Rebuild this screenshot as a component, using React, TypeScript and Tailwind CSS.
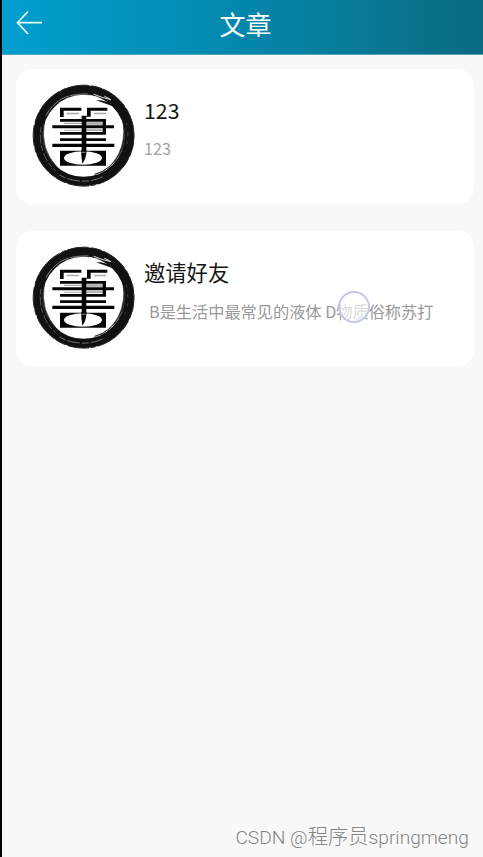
const cjk = "font-['Noto_Sans_CJK_SC',sans-serif]";

function Seal() {
  return (
    <svg viewBox="36 27 312 312" className="block size-[104px] shrink-0" aria-hidden="true">
      <circle cx="191" cy="182" r="137" fill="none" stroke="#111" strokeWidth="28" />
      <circle cx="191" cy="182" r="151.5" fill="none" stroke="#222" strokeWidth="3" strokeDasharray="65 9 32 4 84 7 15 5" />
      <path d="M310 145Q322 200 300 237Q275 283 224 298Q269 288 296 237Q316 196 310 145M72 145Q59 196 80 237Q91 262 112 278Q86 249 76 217Q67 184 72 145" fill="#222" stroke="#222" strokeWidth="2" />
      <g fill="none" stroke="#fff" strokeLinecap="round">
        <path d="M78 121Q94 91 126 71Q160 55 207 57" strokeWidth="2" strokeDasharray="32 5 18 4" opacity=".75" />
        <path d="M208 61L234 67M222 58L246 67L272 74M237 77L271 86M254 64L268 71" strokeWidth="3" opacity=".85" />
        <path d="M63 157Q57 192 68 226Q79 263 106 286" strokeWidth="1.5" strokeDasharray="14 9 25 8" opacity=".6" />
        <path d="M119 300Q145 316 179 318Q220 321 251 304" strokeWidth="3" strokeDasharray="19 8 35 9" opacity=".4" />
        <path d="M319 145Q330 192 315 229" strokeWidth="1.5" strokeDasharray="5 23 9 19" opacity=".4" />
      </g>
      <path d="M228 76L285 96L267 82L242 76Z" fill="#111" />
      <g fill="#aaa">
        <path d="M140 113h37v5h-37zM222 113h37v5h-37zM132 143h53v4h-53zM199 142h49v7h-49zM132 164h53v3h-53zM199 163h49v5h-49z" />
      </g>
      <g fill="#050505">
        <path d="M120 98h64v9h-53v19h-11zM201 98h61v9h-50v18h-13v107h-14V122h16z" />
        <path d="M120 132h138v19h24v9h-24v19H120v-8h128v-11H97v-9h151v-11H120zM120 190h138v8H120zM97 206h186v10H97z" />
        <path d="M120 227h138v45H120z" />
      </g>
      <ellipse cx="189" cy="249" rx="57" ry="20" fill="#fff" />
      <path d="M183 226h17q-1 25-13 40q-3-20-4-40" fill="#050505" />
      <path d="M183 232h14" stroke="#bbb" strokeWidth="2" />
    </svg>
  );
}

export default function App() {
  return (
    <div className={`flex h-[857px] w-[483px] flex-col overflow-hidden border-l-2 border-black bg-[#f8f8f8] ${cjk}`}>
      <header className="grid h-[55px] shrink-0 grid-cols-[1fr_auto_1fr] items-start border-b border-[#55a5b9] bg-linear-to-r from-[#029fd0] via-[#0487ac] to-[#0a6a81] text-white">
        <button aria-label="返回" className="mt-[10px] ml-[14px] w-fit">
          <svg width="27" height="26" viewBox="0 0 27 26" fill="none" stroke="#e2fbff" strokeWidth="1.7">
            <path d="M12 1.5L1.5 12.7L12 24M1.5 12.7H26" />
          </svg>
        </button>
        <h1 className="mt-[4px] mr-[-3px] ml-[3px] text-[26px] leading-[39px]">文章</h1>
        <span />
      </header>
      <main className="flex flex-col gap-[27px] pt-[14px] pr-[9px] pl-[14px]">
        <article className="flex h-[135px] rounded-[16px] bg-white pt-[15px] pl-4">
          <Seal />
          <div className="pl-2">
            <h2 className="mt-[10px] text-[21.3px] leading-[32px] text-[#161616]">123</h2>
            <p className="mt-[10px] text-[16.2px] leading-[24px] text-[#a2a2a2]">123</p>
          </div>
        </article>
        <article className="flex h-[135px] rounded-[16px] bg-white pt-[15px] pl-4">
          <Seal />
          <div className="pl-2">
            <h2 className="mt-[10px] text-[21.3px] leading-[32px] text-[#161616]">邀请好友</h2>
            <div className="relative mt-[11px] pl-[5px]">
              <p className="text-[16.2px] leading-[24px] whitespace-nowrap text-[#999]">B是生活中最常见的液体 D物质俗称苏打</p>
              <span className="absolute top-[-8px] left-[194px] size-8 rounded-full border-2 border-[#c1c7e5] bg-white/65" />
            </div>
          </div>
        </article>
      </main>
      <footer className="mt-auto mr-[14px] mb-[4px] text-right font-['Roboto','Noto_Sans_CJK_SC',sans-serif] text-[19.2px] leading-[30px] font-light whitespace-nowrap text-[#858585]">
        CSDN @<span className="text-[20.3px]">程序员</span>springmeng
      </footer>
    </div>
  );
}
